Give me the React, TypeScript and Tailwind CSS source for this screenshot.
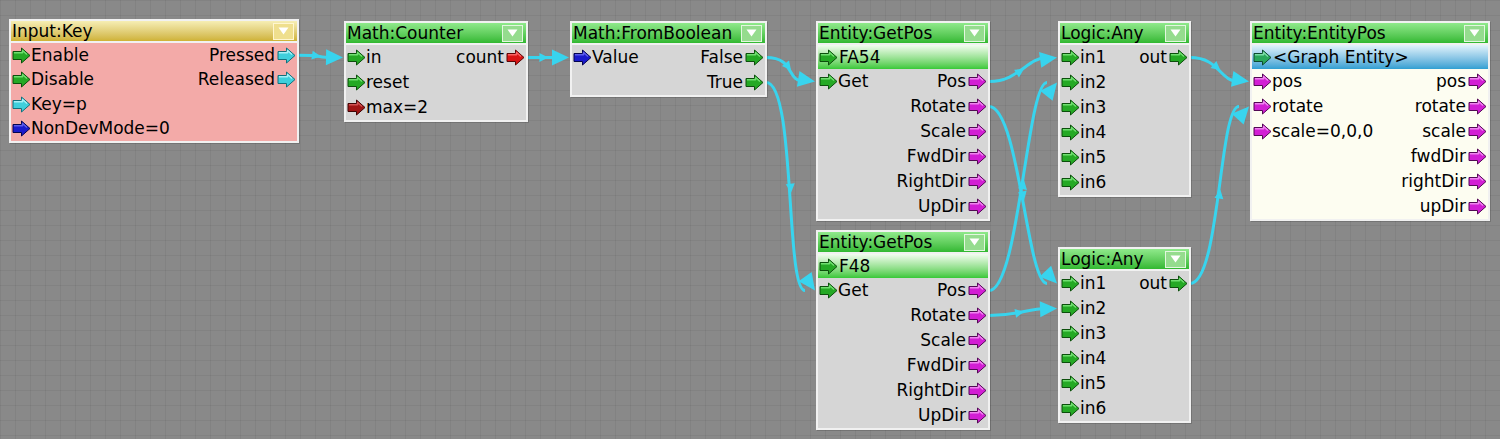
import React from 'react'

type PortColor = 'green' | 'cyan' | 'blue' | 'red' | 'darkred' | 'magenta' | 'teal'
type Port = [string, PortColor]

interface Row { in?: Port; out?: Port }

interface NodeDef {
  x:      number
  y:      number
  w:      number
  title:  string
  theme:  'yellow' | 'green'
  body:   string
  rowH:   number
  rowCls: string
  entity?: { label: string; color: 'green' | 'blue' }
  rows:   Row[]
}

const PORTS: Record<PortColor, { fill: string; edge: string; light: string }> = {
  green:   { fill: '#25a925', edge: '#0c4f0c', light: '#7ee77e' },
  cyan:    { fill: '#3fcfdc', edge: '#12707c', light: '#b8f6fb' },
  blue:    { fill: '#1a1acb', edge: '#04044f', light: '#6a6af0' },
  red:     { fill: '#d81414', edge: '#5a0404', light: '#ff7070' },
  darkred: { fill: '#a01414', edge: '#3e0404', light: '#d85a5a' },
  magenta: { fill: '#d21ed4', edge: '#520854', light: '#f497f5' },
  teal:    { fill: '#2aa85a', edge: '#0d4a2e', light: '#8ae8b4' },
}

const GET_POS_ROWS: Row[] = [
  { in: ['Get', 'green'], out: ['Pos', 'magenta'] },
  { out: ['Rotate', 'magenta'] },
  { out: ['Scale', 'magenta'] },
  { out: ['FwdDir', 'magenta'] },
  { out: ['RightDir', 'magenta'] },
  { out: ['UpDir', 'magenta'] },
]

const ANY_ROWS: Row[] = [
  { in: ['in1', 'green'], out: ['out', 'green'] },
  { in: ['in2', 'green'] },
  { in: ['in3', 'green'] },
  { in: ['in4', 'green'] },
  { in: ['in5', 'green'] },
  { in: ['in6', 'green'] },
]

const NODES: NodeDef[] = [
  {
    x: 9, y: 19, w: 290, title: 'Input:Key', theme: 'yellow', body: 'bg-[#f3aaa8]',
    rowH: 24.5, rowCls: 'h-[24.5px]',
    rows: [
      { in: ['Enable', 'green'],  out: ['Pressed', 'cyan'] },
      { in: ['Disable', 'green'], out: ['Released', 'cyan'] },
      { in: ['Key=p', 'cyan'] },
      { in: ['NonDevMode=0', 'blue'] },
    ],
  },
  {
    x: 344, y: 21, w: 184, title: 'Math:Counter', theme: 'green', body: 'bg-[#d6d6d6]',
    rowH: 25, rowCls: 'h-[25px]',
    rows: [
      { in: ['in', 'green'], out: ['count', 'red'] },
      { in: ['reset', 'green'] },
      { in: ['max=2', 'darkred'] },
    ],
  },
  {
    x: 570, y: 21, w: 197, title: 'Math:FromBoolean', theme: 'green', body: 'bg-[#d6d6d6]',
    rowH: 25, rowCls: 'h-[25px]',
    rows: [
      { in: ['Value', 'blue'], out: ['False', 'green'] },
      { out: ['True', 'green'] },
    ],
  },
  {
    x: 816, y: 21, w: 174, title: 'Entity:GetPos', theme: 'green', body: 'bg-[#d6d6d6]',
    rowH: 25, rowCls: 'h-[25px]', entity: { label: 'FA54', color: 'green' }, rows: GET_POS_ROWS,
  },
  {
    x: 1058, y: 21, w: 133, title: 'Logic:Any', theme: 'green', body: 'bg-[#d6d6d6]',
    rowH: 25, rowCls: 'h-[25px]', rows: ANY_ROWS,
  },
  {
    x: 1250, y: 21, w: 240, title: 'Entity:EntityPos', theme: 'green', body: 'bg-[#fdfdf1]',
    rowH: 25, rowCls: 'h-[25px]', entity: { label: '<Graph Entity>', color: 'blue' },
    rows: [
      { in: ['pos', 'magenta'],         out: ['pos', 'magenta'] },
      { in: ['rotate', 'magenta'],      out: ['rotate', 'magenta'] },
      { in: ['scale=0,0,0', 'magenta'], out: ['scale', 'magenta'] },
      { out: ['fwdDir', 'magenta'] },
      { out: ['rightDir', 'magenta'] },
      { out: ['upDir', 'magenta'] },
    ],
  },
  {
    x: 816, y: 230, w: 174, title: 'Entity:GetPos', theme: 'green', body: 'bg-[#d6d6d6]',
    rowH: 25, rowCls: 'h-[25px]', entity: { label: 'F48', color: 'green' }, rows: GET_POS_ROWS,
  },
  {
    x: 1058, y: 247, w: 133, title: 'Logic:Any', theme: 'green', body: 'bg-[#d6d6d6]',
    rowH: 25, rowCls: 'h-[25px]', rows: ANY_ROWS,
  },
]

// [from node, from row, to node, to row]
const WIRES: [number, number, number, number][] = [
  [0, 0, 1, 0],
  [1, 0, 2, 0],
  [2, 0, 3, 0],
  [2, 1, 6, 0],
  [3, 0, 4, 0],
  [3, 1, 7, 0],
  [6, 0, 4, 1],
  [6, 1, 7, 1],
  [4, 0, 5, 0],
  [7, 0, 5, 1],
]

// border 2 + title 22 (incl. separator) + optional entity row 24
function rowY(n: NodeDef, i: number) {
  return n.y + 24 + (n.entity ? 24 : 0) + n.rowH * (i + 0.5)
}

function PortArrow({ color }: { color: PortColor }) {
  const c = PORTS[color]
  return (
    <svg width="19" height="17" viewBox="0 0 19 17" className="shrink-0">
      <path d="M1 4.5 H9.5 V1 L18 8.5 L9.5 16 V12.5 H1 Z" fill={c.fill} stroke={c.edge} strokeWidth="1" strokeLinejoin="round" />
      <path d="M2 5.8 H10.5 V3.4 L15 7.6" fill="none" stroke={c.light} strokeWidth="1.4" strokeLinejoin="round" opacity="0.85" />
    </svg>
  )
}

function DropButton({ theme }: { theme: 'yellow' | 'green' }) {
  return (
    <div className={`w-[21px] h-[17px] mr-[3px] flex items-center justify-center border
      ${theme === 'yellow' ? 'bg-[#efdf8e] border-[#fff6cf]' : 'bg-[#95dc8e] border-[#e3f7df]'}`}>
      <svg width="11" height="8" viewBox="0 0 11 8">
        <path d="M0.5 0.5 H10.5 L5.5 7.5 Z" fill="#ffffff" />
      </svg>
    </div>
  )
}

function Node({ n }: { n: NodeDef }) {
  return (
    <div
      className="absolute border-2 border-[#f1f1f1] shadow-[1px_1px_0_rgba(0,0,0,0.15)] text-[17px] leading-none text-black"
      style={{ left: n.x, top: n.y, width: n.w }}
    >
      <div className={`h-[22px] flex items-center justify-between border-b-2 border-[#f1f1f1]
        ${n.theme === 'yellow' ? 'bg-gradient-to-b from-[#f6eeb4] to-[#cfb234]' : 'bg-gradient-to-b from-[#8fe98b] to-[#30b830]'}`}>
        <span className="pl-[1px]">{n.title}</span>
        <DropButton theme={n.theme} />
      </div>

      {n.entity && (
        <div className={`h-[24px] flex items-center gap-[1px] pl-[1px]
          ${n.entity.color === 'green' ? 'bg-gradient-to-b from-[#f2fdf0] to-[#36c836]' : 'bg-gradient-to-b from-[#e2f4fb] to-[#2f9fd2]'}`}>
          <PortArrow color={n.entity.color === 'green' ? 'green' : 'teal'} />
          <span>{n.entity.label}</span>
        </div>
      )}

      <div className={n.body}>
        {n.rows.map((r, i) => (
          <div key={i} className={`${n.rowCls} flex items-center justify-between px-[1px]`}>
            <div className="flex items-center">
              {r.in && <><PortArrow color={r.in[1]} /><span>{r.in[0]}</span></>}
            </div>
            <div className="flex items-center gap-[2px]">
              {r.out && <><span>{r.out[0]}</span><PortArrow color={r.out[1]} /></>}
            </div>
          </div>
        ))}
      </div>
    </div>
  )
}

type P = [number, number]

function bez(a: P, b: P, c: P, d: P, t: number): P {
  const u = 1 - t
  return [
    u * u * u * a[0] + 3 * u * u * t * b[0] + 3 * u * t * t * c[0] + t * t * t * d[0],
    u * u * u * a[1] + 3 * u * u * t * b[1] + 3 * u * t * t * c[1] + t * t * t * d[1],
  ]
}

function head(tip: P, from: P, len: number, half: number) {
  const dx = tip[0] - from[0], dy = tip[1] - from[1]
  const l = Math.hypot(dx, dy) || 1
  const ux = dx / l, uy = dy / l
  const bx = tip[0] - ux * len, by = tip[1] - uy * len
  return `${tip[0]},${tip[1]} ${bx - uy * half},${by + ux * half} ${bx + uy * half},${by - ux * half}`
}

function Wires() {
  return (
    <svg className="absolute inset-0" width="1500" height="439">
      {WIRES.map(([fn, fr, tn, tr], i) => {
        const a = NODES[fn], b = NODES[tn]
        const p0: P = [a.x + a.w - 1, rowY(a, fr)]
        const p3: P = [b.x - 1, rowY(b, tr)]
        const d = 30
        const p1: P = [p0[0] + d, p0[1]]
        const p2: P = [p3[0] - d, p3[1]]
        const near = bez(p0, p1, p2, p3, 0.82)
        const mid = bez(p0, p1, p2, p3, 0.52)
        const mid2 = bez(p0, p1, p2, p3, 0.46)
        return (
          <g key={i} fill="#38d4ee">
            <path
              d={`M${p0[0]} ${p0[1]} C${p1[0]} ${p1[1]} ${p2[0]} ${p2[1]} ${p3[0] - 10} ${p3[1]}`}
              fill="none" stroke="#38d4ee" strokeWidth="3"
            />
            <polygon points={head(mid, mid2, 9, 4.5)} />
            <polygon points={head(p3, near, 17, 8)} />
          </g>
        )
      })}
    </svg>
  )
}

export default function App() {
  return (
    <div className="relative w-[1500px] h-[439px] overflow-hidden bg-[#898989] bg-[linear-gradient(to_right,rgba(0,0,0,0.05)_1px,transparent_1px),linear-gradient(to_bottom,rgba(0,0,0,0.05)_1px,transparent_1px)] bg-[size:15px_15px] font-['DejaVu_Sans',sans-serif]">
      <Wires />
      {NODES.map((n, i) => <Node key={i} n={n} />)}
    </div>
  )
}
